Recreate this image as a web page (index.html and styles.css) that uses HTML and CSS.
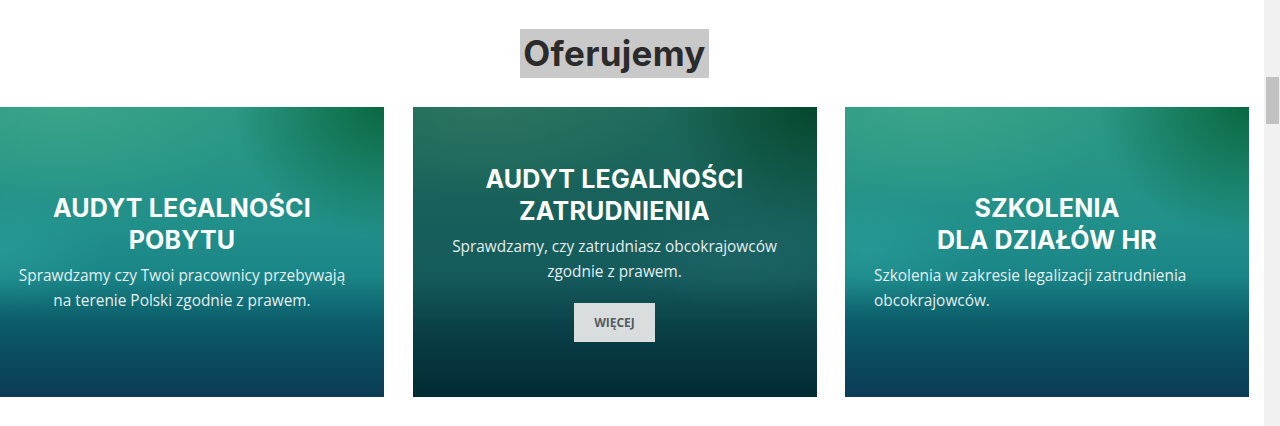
FILE: index.html
```html
<!DOCTYPE html>
<html lang="pl">
<head>
<meta charset="utf-8">
<title>Oferujemy</title>
<link rel="stylesheet" href="styles.css">
</head>
<body>
<div class="page">
  <main class="main">
    <div class="container">
      <h2 class="section-title"><span class="hl">Oferujemy</span></h2>
      <div class="cards">
        <div class="card card-light">
          <h3 class="card-title">AUDYT LEGALNOŚCI<br>POBYTU</h3>
          <p class="card-text center">Sprawdzamy czy Twoi pracownicy przebywają<br>na terenie Polski zgodnie z prawem.</p>
        </div>
        <div class="card card-dark">
          <h3 class="card-title">AUDYT LEGALNOŚCI<br>ZATRUDNIENIA</h3>
          <p class="card-text center">Sprawdzamy, czy zatrudniasz obcokrajowców<br>zgodnie z prawem.</p>
          <a class="btn" href="#">WIĘCEJ</a>
        </div>
        <div class="card card-light">
          <h3 class="card-title">SZKOLENIA<br>DLA DZIAŁÓW HR</h3>
          <p class="card-text left">Szkolenia w zakresie legalizacji zatrudnienia<br>obcokrajowców.</p>
        </div>
      </div>
    </div>
  </main>
  <aside class="scrollbar"><div class="thumb"></div></aside>
</div>
</body>
</html>
```
FILE: styles.css
```css
html, body {
  margin: 0;
  padding: 0;
  background: #ffffff;
  height: 100%;
  overflow: hidden;
}
.page {
  display: flex;
  height: 426px;
}
.main {
  flex: 1;
  min-width: 0;
  overflow: hidden;
}
.container {
  width: 1269px;
  margin-left: -20px;
}
.section-title {
  margin: 29px 0 0;
  text-align: center;
  font-family: "Inter", "Liberation Sans", sans-serif;
  font-weight: 700;
  font-size: 35px;
  line-height: 49px;
  color: #2b2b2b;
}
.hl {
  display: inline-block;
  background: #c9c9c9;
  padding: 0 3px;
  letter-spacing: 0.3px;
}
.cards {
  display: flex;
  gap: 28.5px;
  margin-top: 29px;
}
.card {
  width: 404px;
  height: 290px;
  flex: none;
  display: flex;
  flex-direction: column;
  justify-content: center;
  align-items: center;
  box-sizing: border-box;
  padding: 0 29px;
  color: #fff;
}
.card-light {
  background:
    radial-gradient(ellipse 70% 50% at 20% 0%, rgba(70, 175, 140, 0.55), rgba(70, 175, 140, 0) 70%),
    radial-gradient(ellipse 50% 60% at 100% 0%, rgba(6, 100, 60, 0.92), rgba(6, 100, 60, 0) 75%),
    radial-gradient(ellipse 40% 30% at 5% 50%, rgba(50, 170, 165, 0.4), rgba(50, 170, 165, 0) 70%),
    linear-gradient(to bottom, #2c9883 0%, #22908a 40%, #1a8587 58%, #0b5d6a 74%, #0b4a5e 88%, #0b3d55 100%);
}
.card-dark {
  background:
    radial-gradient(ellipse 65% 45% at 18% 0%, rgba(55, 125, 100, 0.55), rgba(55, 125, 100, 0) 70%),
    radial-gradient(ellipse 50% 55% at 100% 0%, rgba(4, 68, 42, 0.95), rgba(4, 68, 42, 0) 75%),
    radial-gradient(ellipse 40% 25% at 80% 52%, rgba(40, 110, 115, 0.35), rgba(40, 110, 115, 0) 70%),
    linear-gradient(to bottom, #1e6a5b 0%, #175f5b 40%, #155b5d 58%, #0b4149 75%, #05343d 88%, #032b34 100%);
}
.card-title {
  margin: 0 0 7px;
  width: 100%;
  text-align: center;
  font-family: "Inter", "Liberation Sans", sans-serif;
  font-weight: 700;
  font-size: 25px;
  line-height: 32px;
  letter-spacing: 0.2px;
  color: #ffffff;
}
.card-text {
  margin: 0;
  width: 100%;
  font-family: "Open Sans", "Liberation Sans", sans-serif;
  font-size: 15.4px;
  line-height: 25px;
  color: #e4eeee;
}
.card-text.center { text-align: center; }
.card-text.left { text-align: left; }
.btn {
  display: inline-block;
  margin-top: 19px;
  width: 81px;
  height: 39px;
  line-height: 39px;
  text-align: center;
  background: #dadddd;
  color: #555a5c;
  font-family: "Open Sans", "Liberation Sans", sans-serif;
  font-weight: 700;
  font-size: 12px;
  text-decoration: none;
}
.scrollbar {
  width: 16px;
  flex: none;
  background: #f1f1f1;
  display: flex;
  justify-content: center;
}
.thumb {
  width: 13px;
  height: 47px;
  margin-top: 77px;
  background: #c1c1c1;
}
```
